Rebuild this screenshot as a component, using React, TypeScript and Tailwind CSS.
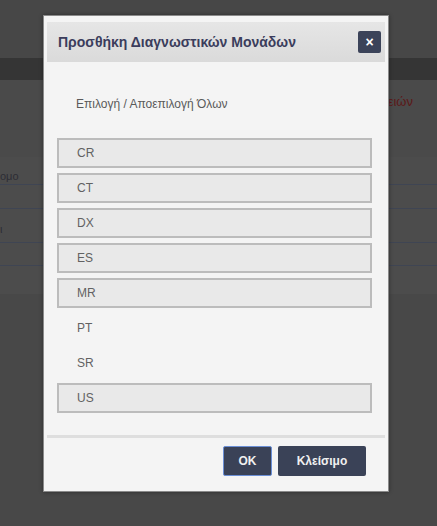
import React, { useState } from 'react';

const modalities = [
  { code: 'CR', selected: true },
  { code: 'CT', selected: true },
  { code: 'DX', selected: true },
  { code: 'ES', selected: true },
  { code: 'MR', selected: true },
  { code: 'PT', selected: false },
  { code: 'SR', selected: false },
  { code: 'US', selected: true },
];

const App = () => {
  const [items, setItems] = useState(modalities);

  const toggle = (code: string) => {
    setItems(items.map(i => (i.code === code ? { ...i, selected: !i.selected } : i)));
  };

  return (
    <div className="relative w-[437px] h-[526px] overflow-hidden bg-[#484848] font-['Liberation_Sans',sans-serif]">
      {/* Page behind the overlay */}
      <div className="h-[58px] bg-[#474747]"></div>
      <div className="h-[22px] bg-[#353535]"></div>
      <div className="h-[77px] bg-[#4a4a4a] relative">
        <span className="absolute right-[24px] top-[12px] text-[13px] text-[#5c1818] whitespace-nowrap">Ενεργειών</span>
      </div>
      <div className="bg-[#4c4c4c]">
        <div className="h-[28px] border-b border-[#3f4553] text-[11px] text-[#2d2d35] pt-[11px]">ομο</div>
        <div className="h-[24px] border-b border-[#3f4553]"></div>
        <div className="h-[34px] border-b border-[#3f4553] text-[11px] text-[#2d2d35] pt-[12px]">ι</div>
        <div className="h-[23px] border-b border-[#3f4553]"></div>
        <div className="h-[28px]"></div>
      </div>

      {/* Modal */}
      <div className="absolute left-[43px] top-[15px] w-[346px] h-[477px] bg-[#f4f4f4] border border-[#8a8a8a] shadow-[0_0_4px_rgba(0,0,0,0.4)] px-[3px] pt-[6px]">
        <div className="h-[40px] bg-gradient-to-b from-[#e6e6e6] to-[#dadada] flex items-center justify-between pl-[11px] pr-[4px]">
          <span className="text-[14px] font-bold text-[#3b3d5c]">Προσθήκη Διαγνωστικών Μονάδων</span>
          <button className="w-[23px] h-[22px] bg-[#3b4359] rounded-[2px] flex items-center justify-center text-white text-[14px] font-bold leading-none">
            ×
          </button>
        </div>

        <div className="pl-[29px] pt-[33px] h-[76px] text-[12px] text-[#5a5a5a]">
          Επιλογή / Αποεπιλογή Όλων
        </div>

        <div className="flex flex-col gap-[5px] pl-[10px] pr-[13px]">
          {items.map(item => (
            <div
              key={item.code}
              onClick={() => toggle(item.code)}
              className={`h-[30px] flex items-center pl-[18px] text-[12px] text-[#626262] ${
                item.selected ? 'bg-[#e9e9e9] border-2 border-[#bcbcbc]' : 'border-2 border-transparent'
              }`}
            >
              {item.code}
            </div>
          ))}
        </div>

        <div className="mt-[22px] h-[3px] bg-[#dedede]"></div>

        <div className="flex justify-end gap-[6px] pr-[19px] pt-[8px]">
          <button className="w-[49px] h-[30px] bg-[#3a4257] border border-[#6b8fd6] rounded-[2px] text-[#f0f0f0] text-[12px] font-bold">
            OK
          </button>
          <button className="w-[88px] h-[30px] bg-[#3a4257] rounded-[2px] text-[#f0f0f0] text-[12px] font-bold">
            Κλείσιμο
          </button>
        </div>
      </div>
    </div>
  );
};

export default App;
